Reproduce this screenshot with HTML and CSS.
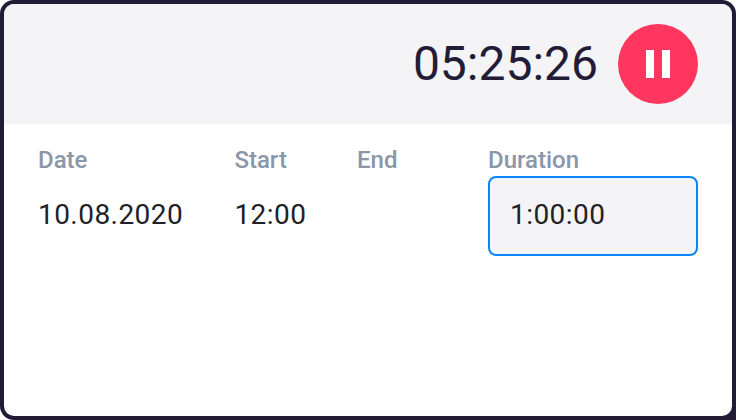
FILE: index.html
```html
<!DOCTYPE html>
<html lang="en">
<head>
    <meta charset="UTF-8">
    <meta name="viewport" content="width=device-width, initial-scale=1.0">
    <title>Timer</title>
    <link rel="stylesheet" href="styles.css">
</head>
<body>
    <div class="timer-window">
        <div class="timer-content">
            <header class="timer-header">
                <span class="timer-value">05:25:26</span>
                <button class="pause-button" type="button" aria-label="Pause">
                    <svg width="24" height="28" viewBox="0 0 24 28">
                        <path d="M0 0h8v28H0zM16 0h8v28h-8z" fill="#fff"/>
                    </svg>
                </button>
            </header>
            <div class="entry">
                <div class="field">
                    <div class="label">Date</div>
                    <div class="value">10.08.2020</div>
                </div>
                <div class="field">
                    <div class="label">Start</div>
                    <div class="value">12:00</div>
                </div>
                <div class="field">
                    <div class="label">End</div>
                </div>
                <div class="field">
                    <label class="label" for="duration">Duration</label>
                    <input class="duration-input" id="duration" type="text" value="1:00:00">
                </div>
            </div>
        </div>
    </div>
</body>
</html>
```
FILE: styles.css
```css
body {
    margin: 0;
    background: #fff;
    font-family: Roboto, sans-serif;
}
.timer-window {
    height: 420px;
    box-sizing: border-box;
    padding: 4px;
    border-radius: 14px 14px 0 14px;
    background: #231a35;
}
.timer-content {
    height: 100%;
    border-radius: 10px;
    overflow: hidden;
    background: #fff;
}
.timer-header {
    display: flex;
    align-items: center;
    justify-content: flex-end;
    height: 120px;
    padding-right: 34px;
    gap: 20px;
    background: #f4f4f7;
}
.timer-value {
    font-size: 48px;
    line-height: 56px;
    color: #231c36;
}
.pause-button {
    display: flex;
    align-items: center;
    justify-content: center;
    width: 80px;
    height: 80px;
    padding: 0;
    border: none;
    border-radius: 50%;
    background: #ff365e;
}
.entry {
    display: grid;
    grid-template-columns: 196.4px 122.6px 131px 210px;
    padding: 20px 34px;
}
.label {
    display: block;
    height: 32px;
    font-size: 24px;
    font-weight: 500;
    line-height: 32px;
    color: #8b96a8;
}
.value {
    font-size: 28px;
    line-height: 78px;
    color: #222226;
    letter-spacing: 0.45px;
}
.duration-input {
    display: block;
    width: 210px;
    height: 80px;
    box-sizing: border-box;
    padding: 0 20px 4px;
    border: 2px solid #0686ff;
    border-radius: 8px;
    outline: none;
    background: #f4f4f7;
    font-family: inherit;
    font-size: 28px;
    letter-spacing: 0.45px;
    color: #222226;
}
```
